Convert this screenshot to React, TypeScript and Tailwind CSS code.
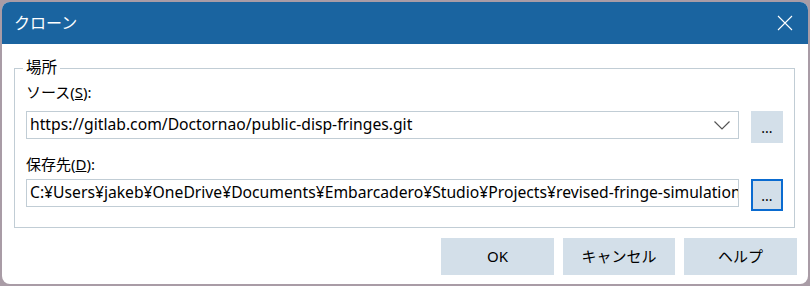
import React from "react";

const font = { fontFamily: '"Noto Sans", "Noto Sans CJK JP", sans-serif' };

function DotsButton({ focused }: { focused?: boolean }) {
  return (
    <button
      className={
        "w-[32px] h-[32px] shrink-0 bg-[#d3dfe9] flex items-center justify-center text-[14px] leading-none text-black " +
        (focused ? "border-2 border-[#0a6bd0]" : "border-2 border-transparent")
      }
    >
      <span className="mt-[1px]">...</span>
    </button>
  );
}

export default function App() {
  return (
    <div
      className="w-[810px] h-[286px] bg-[#a99ca6] pt-[2px] pl-[2px]"
      style={font}
    >
      <div className="w-[806px] h-[282px] bg-white rounded-lg overflow-hidden flex flex-col">
        {/* title bar */}
        <div className="h-[42px] bg-[#1a64a0] flex items-center justify-between pl-[12px] pr-[15px]">
          <span className="text-white text-[16px]">クローン</span>
          <svg width="16" height="16" viewBox="0 0 16 16">
            <path d="M1 1 L15 15 M15 1 L1 15" stroke="#fff" strokeWidth="1.1" />
          </svg>
        </div>

        <div className="flex-1 px-[12px] pt-[24px]">
          {/* group box */}
          <div className="relative w-[781px] h-[160px] border border-[#c1cdd5] px-[11px] pt-[12px]">
            <span className="absolute -top-[13px] left-[8px] bg-white px-[3px] text-[15.5px] leading-[22px] text-black">
              場所
            </span>

            <div className="text-[15px] leading-[22px] text-black">
              ソース(<span className="underline">S</span>):
            </div>
            <div className="flex items-start gap-[12px] mt-[8px]">
              <div className="w-[714px] h-[28px] border border-[#c1cdd5] flex items-center justify-between pl-[3px] pr-[8px]">
                <span className="text-[15.7px] text-black whitespace-nowrap">
                  https://gitlab.com/Doctornao/public-disp-fringes.git
                </span>
                <svg width="16" height="9" viewBox="0 0 16 9">
                  <path d="M0.5 0.5 L8 8 L15.5 0.5" fill="none" stroke="#555" strokeWidth="1.2" />
                </svg>
              </div>
              <DotsButton />
            </div>

            <div className="text-[15px] leading-[22px] text-black mt-[10px]">
              保存先(<span className="underline">D</span>):
            </div>
            <div className="flex items-start gap-[12px] mt-[4px]">
              <div className="w-[714px] h-[28px] border border-[#c1cdd5] flex items-center pl-[3px] overflow-hidden">
                <span className="text-[15.7px] text-black whitespace-nowrap">
                  C:¥Users¥jakeb¥OneDrive¥Documents¥Embarcadero¥Studio¥Projects¥revised-fringe-simulation
                </span>
              </div>
              <DotsButton focused />
            </div>
          </div>

          {/* bottom buttons */}
          <div className="flex justify-end gap-[9px] mt-[10px] -mr-[1px]">
            <button className="w-[113px] h-[37px] bg-[#d3dfe9] text-[15px] text-black">OK</button>
            <button className="w-[112px] h-[37px] bg-[#d3dfe9] text-[15px] text-black">キャンセル</button>
            <button className="w-[113px] h-[37px] bg-[#d3dfe9] text-[15px] text-black">ヘルプ</button>
          </div>
        </div>
      </div>
    </div>
  );
}
